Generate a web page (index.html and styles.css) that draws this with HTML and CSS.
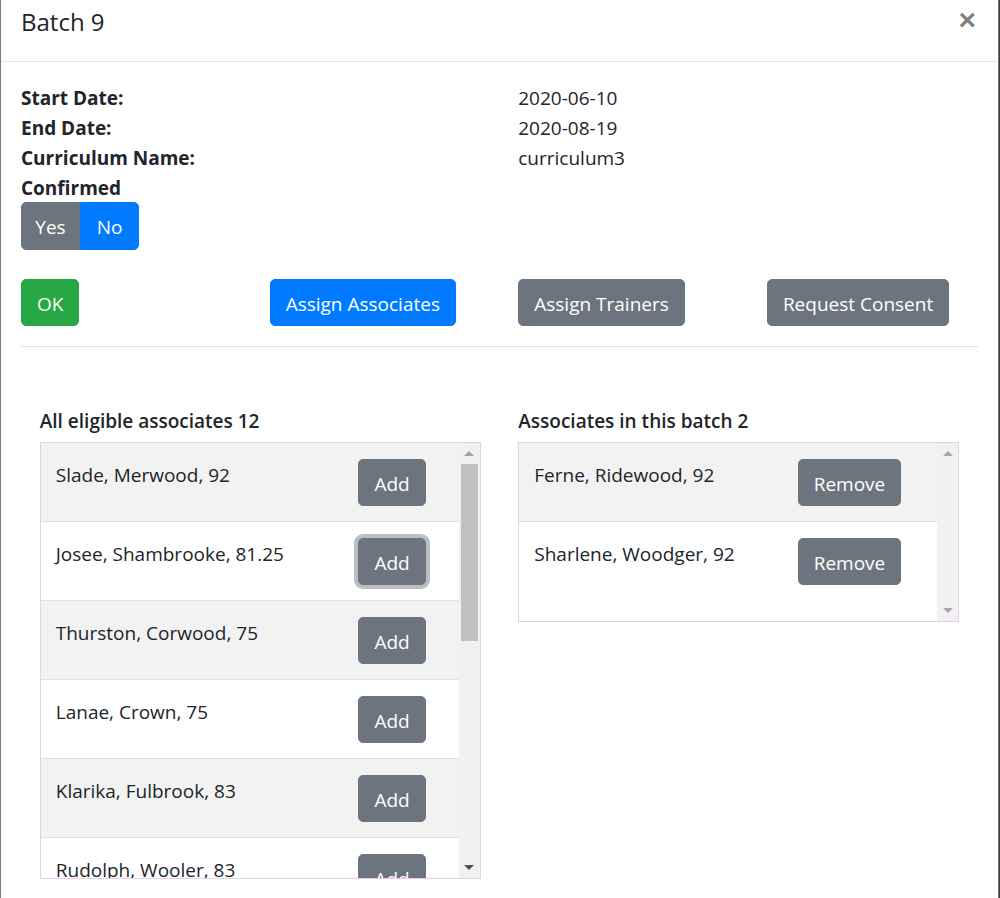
FILE: index.html
```html
<!DOCTYPE html>
<html lang="en">
<head>
<meta charset="utf-8">
<title>Batch 9</title>
<link rel="stylesheet" href="styles.css">
</head>
<body>
<div class="modal">
  <header class="modal-header">
    <h5 class="modal-title">Batch 9</h5>
    <button class="close" type="button" aria-label="Close">×</button>
  </header>
  <div class="modal-body">
    <div class="details">
      <div class="label">Start Date:</div><div class="value">2020-06-10</div>
      <div class="label">End Date:</div><div class="value">2020-08-19</div>
      <div class="label">Curriculum Name:</div><div class="value">curriculum3</div>
      <div class="label">Confirmed</div><div class="value"></div>
    </div>
    <div class="btn-group">
      <button class="btn btn-secondary" type="button">Yes</button>
      <button class="btn btn-primary" type="button">No</button>
    </div>
    <div class="actions">
      <div class="action-cell"><button class="btn btn-success" type="button">OK</button></div>
      <div class="action-cell"><button class="btn btn-primary" type="button">Assign Associates</button></div>
      <div class="action-cell"><button class="btn btn-secondary" type="button">Assign Trainers</button></div>
      <div class="action-cell"><button class="btn btn-secondary" type="button">Request Consent</button></div>
    </div>
    <hr class="divider">
    <div class="lists">
      <section class="list-col">
        <h6 class="list-title">All eligible associates 12</h6>
        <div class="list-box list-box-tall">
          <div class="rows rows-add">
            <div class="row"><span class="name">Slade, Merwood, 92</span><button class="btn btn-secondary" type="button">Add</button></div>
            <div class="row"><span class="name">Josee, Shambrooke, 81.25</span><button class="btn btn-secondary focus" type="button">Add</button></div>
            <div class="row"><span class="name">Thurston, Corwood, 75</span><button class="btn btn-secondary" type="button">Add</button></div>
            <div class="row"><span class="name">Lanae, Crown, 75</span><button class="btn btn-secondary" type="button">Add</button></div>
            <div class="row"><span class="name">Klarika, Fulbrook, 83</span><button class="btn btn-secondary" type="button">Add</button></div>
            <div class="row"><span class="name">Rudolph, Wooler, 83</span><button class="btn btn-secondary" type="button">Add</button></div>
            <div class="row"><span class="name">Marlo, Eastwood, 79</span><button class="btn btn-secondary" type="button">Add</button></div>
          </div>
          <div class="scrollbar">
            <div class="sb-btn"><span class="arrow-up"></span></div>
            <div class="sb-track"><div class="sb-thumb"></div></div>
            <div class="sb-btn"><span class="arrow-down active"></span></div>
          </div>
        </div>
      </section>
      <section class="list-col">
        <h6 class="list-title">Associates in this batch 2</h6>
        <div class="list-box list-box-short">
          <div class="rows rows-remove">
            <div class="row"><span class="name">Ferne, Ridewood, 92</span><button class="btn btn-secondary" type="button">Remove</button></div>
            <div class="row"><span class="name">Sharlene, Woodger, 92</span><button class="btn btn-secondary" type="button">Remove</button></div>
          </div>
          <div class="scrollbar">
            <div class="sb-btn"><span class="arrow-up"></span></div>
            <div class="sb-track"></div>
            <div class="sb-btn"><span class="arrow-down"></span></div>
          </div>
        </div>
      </section>
    </div>
  </div>
</div>
</body>
</html>
```

FILE: styles.css
```css
* { box-sizing: border-box; }

html, body {
  margin: 0;
  padding: 0;
  background: #3a3a3a;
}

body {
  font-family: "Open Sans", "Noto Sans", "Liberation Sans", sans-serif;
  font-size: 19px;
  line-height: 30px;
  color: #212529;
}

.modal {
  width: 999px;
  height: 898px;
  overflow: hidden;
  background: #fff;
  border-left: 1px solid #7a7a7a;
  border-right: 1px solid #7a7a7a;
}

.modal-header {
  display: flex;
  align-items: flex-start;
  height: 62px;
  padding: 3px 20px 0 20px;
  border-bottom: 1px solid #e6e6e6;
}

.modal-title {
  margin: 0;
  font-size: 24px;
  font-weight: 400;
  line-height: 37px;
}

.close {
  margin-left: auto;
  margin-right: 2px;
  margin-top: 2px;
  padding: 0;
  border: 0;
  background: transparent;
  font-family: "Liberation Sans", "Open Sans", sans-serif;
  font-size: 30px;
  font-weight: 700;
  line-height: 30px;
  color: #000;
  opacity: .5;
}

.modal-body {
  padding: 21px 20px 0 20px;
}

.details {
  display: grid;
  grid-template-columns: 1fr 1fr;
  column-gap: 37.5px;
}

.label {
  font-weight: 700;
  line-height: 30px;
}

.value {
  line-height: 30px;
}

.btn {
  display: inline-block;
  font-family: inherit;
  font-size: 19px;
  line-height: 30px;
  height: 47.5px;
  padding: 9px 15px 6px 15px;
  border: 1px solid transparent;
  border-radius: 5px;
  color: #fff;
  cursor: pointer;
}

.btn-primary { background: #007bff; border-color: #007bff; }
.btn-secondary { background: #6c757d; border-color: #6c757d; }
.btn-success { background: #28a745; border-color: #28a745; }

.btn.focus {
  box-shadow: 0 0 0 4px rgba(130, 138, 145, .55);
}

.btn-group {
  display: inline-flex;
  margin-top: -1px;
}

.btn-group .btn {
  width: 59px;
  padding-left: 0;
  padding-right: 0;
  text-align: center;
}

.btn-group .btn:first-child {
  border-top-right-radius: 0;
  border-bottom-right-radius: 0;
}

.btn-group .btn:last-child {
  border-top-left-radius: 0;
  border-bottom-left-radius: 0;
}

.actions {
  display: grid;
  grid-template-columns: repeat(4, 1fr);
  column-gap: 37.5px;
  margin-top: 29px;
}

.divider {
  margin: 20px 0 0 0;
  border: 0;
  border-top: 1px solid #e2e2e2;
}

.lists {
  display: grid;
  grid-template-columns: 1fr 1fr;
  column-gap: 37.5px;
  padding: 0 18.75px;
  margin-top: 59px;
}

.list-title {
  margin: 0 0 6px 0;
  font-size: 19px;
  font-weight: 600;
  line-height: 30px;
}

.list-box {
  display: flex;
  border: 1px solid #eccbf0;
  overflow: hidden;
}

.list-box-tall { height: 437px; }
.list-box-short { height: 180px; }

.rows {
  flex: 1;
  overflow: hidden;
}

.row {
  display: flex;
  justify-content: space-between;
  align-items: flex-start;
  padding: 15.5px 33px 15px 15px;
  border-top: 1px solid #e0e0e0;
}

.row:first-child { border-top: 0; }
.row:nth-child(odd) { background: #f2f2f2; }
.row:nth-child(even) { background: #fff; }

.rows-remove .row { padding-right: 36px; }

.name {
  padding-top: 1px;
  line-height: 30px;
}

.scrollbar {
  width: 21px;
  flex: none;
  display: flex;
  flex-direction: column;
  background: #f1f1f1;
}

.sb-btn {
  height: 21px;
  display: flex;
  align-items: center;
  justify-content: center;
}

.sb-track {
  flex: 1;
  padding: 0 2px;
}

.sb-thumb {
  height: 177px;
  background: #c1c1c1;
}

.arrow-up,
.arrow-down {
  width: 0;
  height: 0;
  border-left: 5px solid transparent;
  border-right: 5px solid transparent;
}

.arrow-up { border-bottom: 5px solid #a3a3a3; }
.arrow-down { border-top: 5px solid #a3a3a3; }
.arrow-down.active { border-top-color: #505050; }
```
